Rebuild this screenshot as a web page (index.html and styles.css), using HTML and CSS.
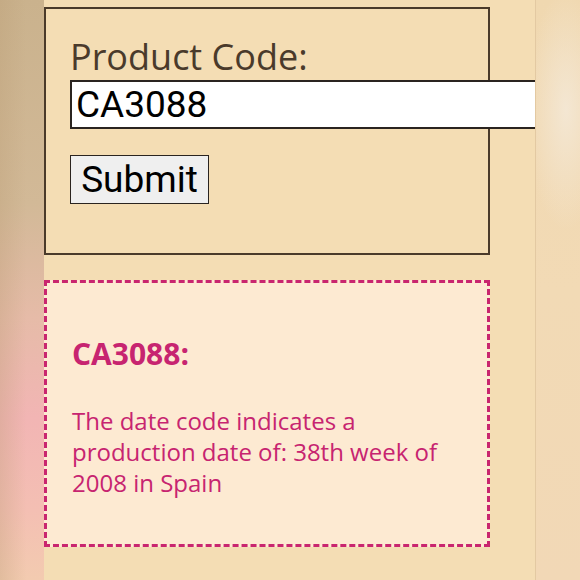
FILE: index.html
```html
<!DOCTYPE html>
<html>
<head>
<meta charset="utf-8">
<link rel="stylesheet" href="styles.css">
</head>
<body>
<div class="page">
  <div class="side side-left"></div>
  <main class="column">
    <form class="form-box">
      <label class="label" for="code">Product Code:</label>
      <input class="code-input" id="code" type="text" value="CA3088">
      <button class="submit" type="button">Submit</button>
    </form>
    <section class="result">
      <h2 class="result-title">CA3088:</h2>
      <p class="result-text">The date code indicates a production date of: 38th week of 2008 in Spain</p>
    </section>
  </main>
  <div class="side side-right"></div>
</div>
</body>
</html>
```
FILE: styles.css
```css
html, body {
  margin: 0;
  padding: 0;
  width: 580px;
  height: 580px;
  overflow: hidden;
}
.page {
  display: flex;
  width: 580px;
  height: 580px;
}
.side {
  width: 44px;
  flex: none;
}
.side-left {
  background:
    linear-gradient(to right, rgba(185,155,115,0.3), rgba(255,255,255,0) 60%),
    linear-gradient(to bottom, #cab28d 0%, #d2b997 35%, #e6bba8 55%, #f2b5b4 72%, #f4bfb3 88%, #f3cbb0 100%);
}
.side-right {
  background:
    radial-gradient(ellipse 40px 120px at 30px 110px, rgba(244,232,214,0.9), rgba(244,232,214,0) 100%),
    linear-gradient(to bottom, #f0d8b0, #f2dab5 50%, #f2d8b6);
}
.column {
  width: 492px;
  flex: none;
  background: #f4ddb4;
  border-right: 1px solid #e3c9a2;
  box-sizing: border-box;
  overflow: hidden;
  padding-top: 7px;
}
.form-box {
  margin: 0;
  width: 446px;
  height: 248px;
  box-sizing: border-box;
  border: 2px solid #4a3a2a;
  padding: 26px 0 0 24px;
}
.label {
  display: block;
  font-family: "Open Sans", "Liberation Sans", sans-serif;
  font-size: 36px;
  line-height: 44px;
  color: #4a3a2b;
}
.code-input {
  display: block;
  box-sizing: border-box;
  width: 470px;
  height: 49px;
  margin: 1px 0 0 0;
  padding: 0 4px;
  border: 2px solid #2a2420;
  background: #fff;
  font-family: Roboto, "Liberation Sans", sans-serif;
  font-size: 37px;
  color: #000;
  outline: none;
}
.submit {
  display: block;
  box-sizing: border-box;
  margin-top: 26px;
  width: 139px;
  height: 49px;
  padding: 0;
  border: 1.5px solid #2a2420;
  background: #efefef;
  font-family: Roboto, "Liberation Sans", sans-serif;
  font-size: 37px;
  color: #000;
}
.result {
  margin-top: 25px;
  width: 446px;
  height: 267px;
  box-sizing: border-box;
  border: 3px dashed #c9266f;
  background: #fdead2;
  padding: 53px 20px 0 25px;
  color: #c72470;
  font-family: "Open Sans", "Liberation Sans", sans-serif;
}
.result-title {
  margin: 0;
  font-size: 30px;
  line-height: 36px;
  font-weight: 700;
}
.result-text {
  margin: 33px 0 0 0;
  font-size: 24px;
  line-height: 31px;
}
```
